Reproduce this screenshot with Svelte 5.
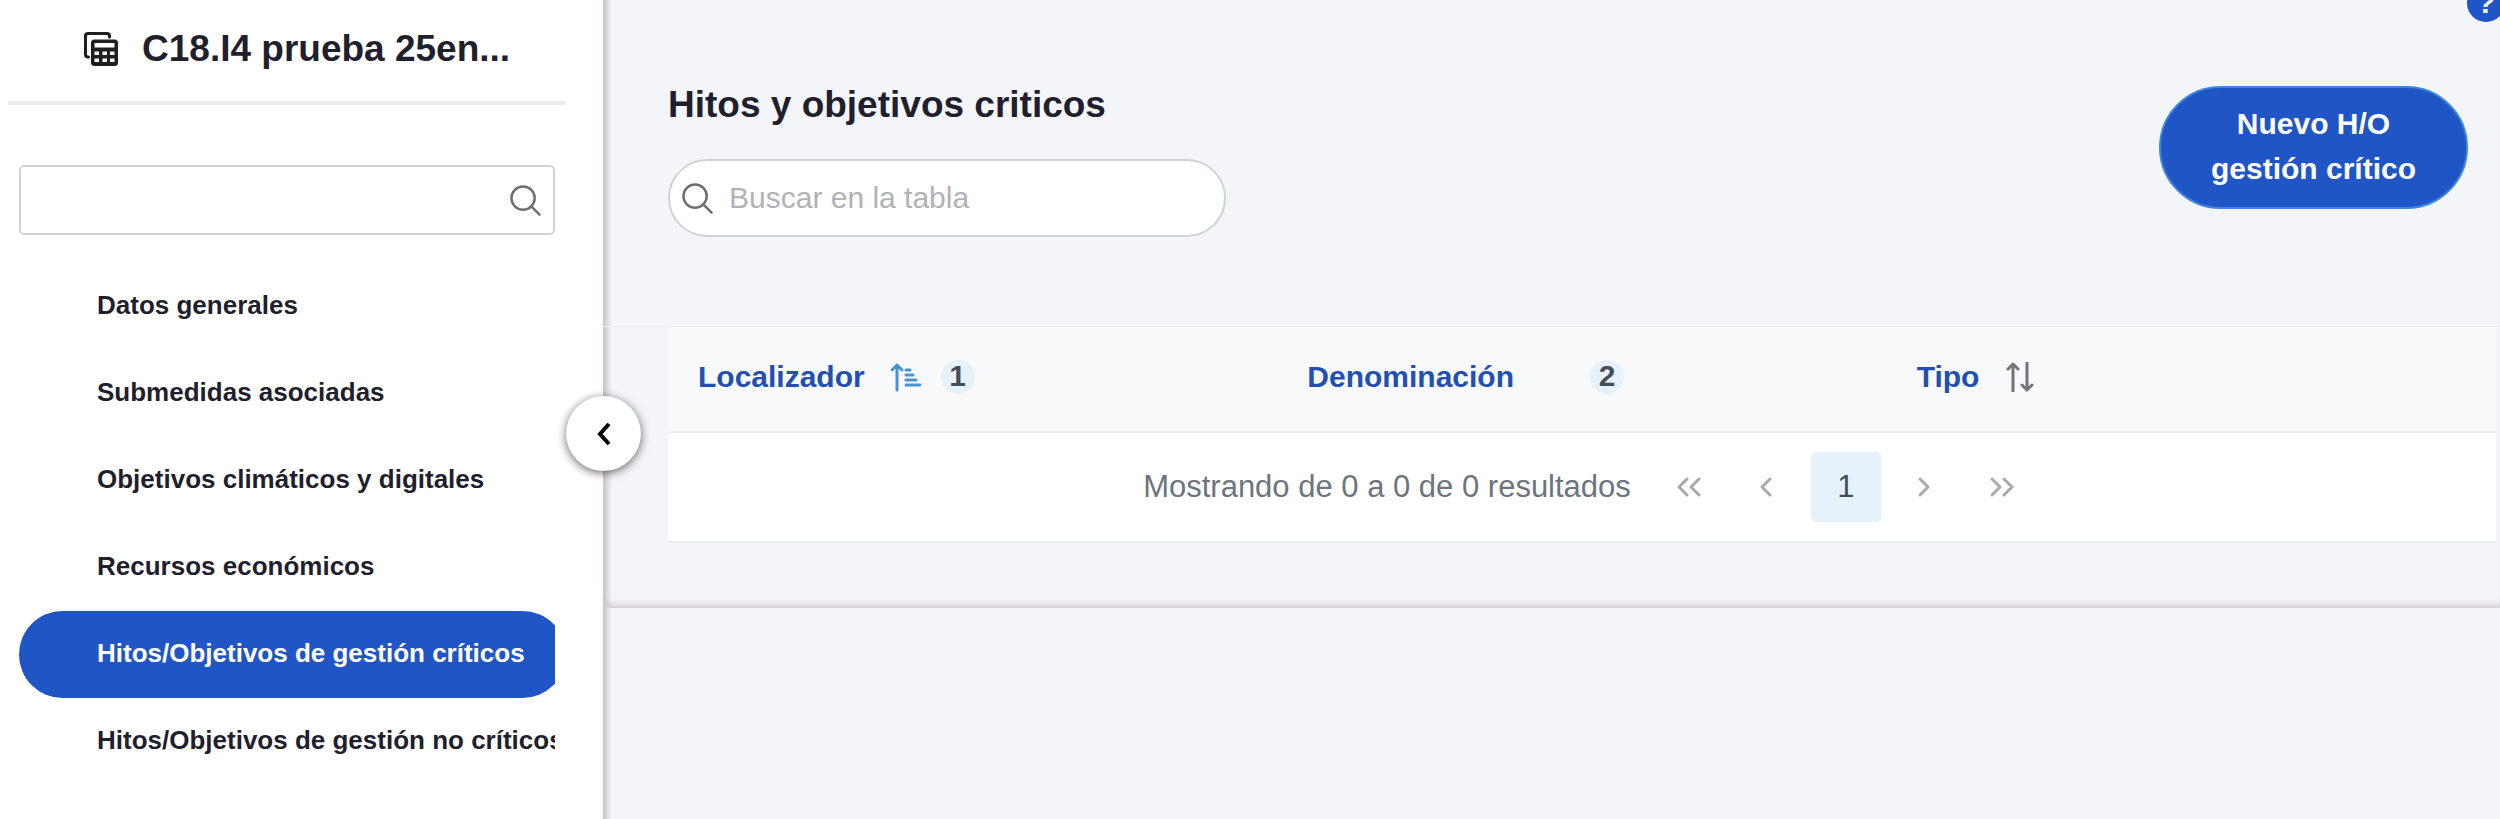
<script lang="ts">
	type Column = { label: string; sort: 'asc' | 'none' | 'both'; order?: number }

	const items = [
		'Datos generales',
		'Submedidas asociadas',
		'Objetivos climáticos y digitales',
		'Recursos económicos',
		'Hitos/Objetivos de gestión críticos',
		'Hitos/Objetivos de gestión no críticos'
	]

	const columns: Column[] = [
		{ label: 'Localizador', sort: 'asc', order: 1 },
		{ label: 'Denominación', sort: 'none', order: 2 },
		{ label: 'Tipo', sort: 'both' }
	]

	let active = $state(4)
	let filter = $state('')
	let search = $state('')
</script>

{#snippet searchIcon()}
	<svg class="search-icon" viewBox="0 0 32 32" aria-hidden="true">
		<circle cx="13.5" cy="13.5" r="12" />
		<path d="M22 22l8.500 8.500" />
	</svg>
{/snippet}

<div class="page">
	<aside>
		<header>
			<svg class="title-icon" viewBox="0 0 34 34" aria-hidden="true">
				<path d="M4.500 25H4c-1.500 0-2.500-1-2.500-2.500V4c0-1.500 1-2.500 2.500-2.500h19c1.500 0 2.500 1 2.500 2.500v1" />
				<rect class="solid" x="7" y="7.500" width="27" height="26.500" rx="3.500" />
				<path
					class="hole"
					d="M10.500 11h20v4.500h-20zM10.500 19.500h4.500v3.500h-4.500zM18.500 19.500h4.500v3.500h-4.500zM26 19.500h4.500v3.500H26zM10.500 26.500h4.500v3.500h-4.500zM18.500 26.500h4.500v3.500h-4.500zM26 26.500h4.500v3.500H26z"
				/>
			</svg>
			<h1>C18.I4 prueba 25en...</h1>
		</header>

		<div class="filter">
			<input type="text" aria-label="Filtrar menú" bind:value={filter} />
			{@render searchIcon()}
		</div>

		<nav>
			{#each items as item, i}
				<a href="#seccion-{i}" class:active={i === active} onclick={() => (active = i)}>{item}</a>
			{/each}
		</nav>

		<button class="collapse" aria-label="Contraer menú">
			<svg viewBox="0 0 14 22" aria-hidden="true"><path d="M12 1L3 11l9 10" /></svg>
		</button>
	</aside>

	<main>
		<button class="help" aria-label="Ayuda">?</button>

		<div class="panel">
			<div class="toolbar">
				<div>
					<h2>Hitos y objetivos criticos</h2>
					<div class="search">
						{@render searchIcon()}
						<input
							type="text"
							placeholder="Buscar en la tabla"
							aria-label="Buscar en la tabla"
							bind:value={search}
						/>
					</div>
				</div>
				<button class="new">Nuevo H/O<br />gestión crítico</button>
			</div>

			<div class="content">
				<table>
					<thead>
						<tr>
							{#each columns as column}
								<th scope="col">
									<div class="head">
										<span>{column.label}</span>
										{#if column.sort === 'asc'}
											<svg class="sort asc" viewBox="0 0 30 30" aria-hidden="true">
												<path d="M6 28V3M1 8l5-5 5 5M15 8h4M15 13h7M15 18h10M15 23h14" />
											</svg>
										{:else if column.sort === 'both'}
											<svg class="sort" viewBox="0 0 30 30" aria-hidden="true">
												<path d="M8 29V2M3 7l5-5 5 5M22 1v27M17 23l5 5 5-5" />
											</svg>
										{:else}
											<span class="sort"></span>
										{/if}
										{#if column.order}
											<span class="badge">{column.order}</span>
										{/if}
									</div>
								</th>
							{/each}
						</tr>
					</thead>
				</table>

				<div class="paginator">
					<span>Mostrando de 0 a 0 de 0 resultados</span>
					<button aria-label="Primera página" disabled>
						<svg viewBox="0 0 26 20" aria-hidden="true"><path d="M10 2l-8 8 8 8M22 2l-8 8 8 8" /></svg>
					</button>
					<button aria-label="Página anterior" disabled>
						<svg viewBox="0 0 26 20" aria-hidden="true"><path d="M15 2l-8 8 8 8" /></svg>
					</button>
					<button class="current" aria-current="page">1</button>
					<button aria-label="Página siguiente" disabled>
						<svg viewBox="0 0 26 20" aria-hidden="true"><path d="M9 2l8 8-8 8" /></svg>
					</button>
					<button aria-label="Última página" disabled>
						<svg viewBox="0 0 26 20" aria-hidden="true"><path d="M3 2l8 8-8 8M15 2l8 8-8 8" /></svg>
					</button>
				</div>
			</div>
		</div>
	</main>
</div>

<style>
	:global(body) {
		background: #f3f5f9;
	}

	.page {
		--blue: #1f55c4;
		--ink: #1f1f2e;
		--line: #e9ebed;

		display: grid;
		grid-template-columns: 603px 1fr;

		min-height: 100vh;

		font-family: 'Liberation Sans', Arial, sans-serif;
		font-size: 30px;
		color: var(--ink);
	}

	.page * {
		box-sizing: border-box;
	}

	button,
	input {
		font: inherit;
	}

	button {
		padding: 0;
		border: none;
		cursor: pointer;
	}

	svg {
		fill: none;
		stroke: currentColor;
		stroke-linecap: round;
		stroke-linejoin: round;
	}

	h1,
	h2 {
		margin: 0;

		font-size: 37px;
		line-height: 48px;
	}

	aside {
		position: relative;

		background: #fff;
	}

	header {
		display: flex;
		align-items: center;
		gap: 24px;

		margin: 0 37px 60px 8px;
		padding: 25px 0 28px 76px;
		border-bottom: 4px solid #ececec;
	}

	.title-icon {
		width: 34px;
		height: 34px;

		color: #1f1f20;
		stroke-width: 3;
	}

	.title-icon .solid {
		fill: currentColor;
		stroke: none;
	}

	.title-icon .hole {
		fill: #fff;
		stroke: none;
	}

	.search-icon {
		flex: none;

		width: 31px;
		height: 31px;

		color: #6c6e72;
		stroke-width: 2.5;
	}

	.filter {
		display: flex;
		align-items: center;

		height: 70px;
		margin: 0 48px 28px 19px;
		padding: 0 12px;
		border: 2px solid #d0d4d6;
		border-radius: 5px;
	}

	.filter input,
	.search input {
		flex: 1;

		min-width: 0;
		padding: 0;
		border: none;
		outline: none;
		background: none;
	}

	nav {
		display: grid;
		grid-template-columns: 547px;

		margin: 0 48px 0 19px;
		overflow: hidden;
	}

	nav a {
		padding: 26px 0 29px 78px;
		border-radius: 44px;

		font-size: 26px;
		font-weight: bold;
		line-height: 32px;
		white-space: nowrap;
		color: inherit;
		text-decoration: none;
	}

	nav a.active {
		background: var(--blue);
		color: #fff;
	}

	.collapse {
		display: grid;
		place-content: center;

		position: absolute;
		z-index: 1;
		top: 396px;
		right: -38px;

		width: 75px;
		height: 75px;
		border-radius: 50%;

		background: #fff;
		color: #000;
		box-shadow: 0 2px 10px rgb(0 0 0 / 60%);
	}

	.collapse svg {
		width: 14px;
		height: 22px;

		stroke-width: 4;
		stroke-linecap: butt;
		stroke-linejoin: miter;
	}

	main {
		position: relative;

		min-width: 0;
		overflow: hidden;

		background: linear-gradient(to right, #cbc2c6, #f3f5f9 9px);
	}

	.help {
		position: absolute;
		top: -16px;
		right: -5px;

		width: 38px;
		height: 38px;
		border-radius: 50%;

		background: var(--blue);
		color: #fff;
		font-weight: bold;
	}

	.panel {
		padding-bottom: 65px;
		border-bottom-left-radius: 8px;

		box-shadow: inset 0 -8px 8px -6px #cbc2c6;
	}

	.toolbar {
		display: flex;
		justify-content: space-between;
		align-items: flex-start;

		padding: 81px 32px 89px 65px;
	}

	.search {
		display: flex;
		align-items: center;
		gap: 16px;

		width: 558px;
		height: 78px;
		margin-top: 30px;
		padding: 0 24px 0 12px;
		border: 2px solid #d0d3d6;
		border-radius: 39px;

		background: #fff;
	}

	.search input::placeholder {
		color: #b0b2b5;
		opacity: 1;
	}

	.new {
		width: 309px;
		margin-top: 5px;
		padding: 13px 0 16px;
		border: 2px solid #3f86dc;
		border-radius: 62px;

		background: var(--blue);
		color: #fff;
		font-weight: bold;
		line-height: 45px;
	}

	.content {
		padding: 0 4px 0 65px;
		border-top: 1px solid #efeff3;
	}

	table {
		width: 100%;
		table-layout: fixed;
		border-collapse: collapse;
	}

	th {
		height: 105px;
		padding: 0 30px 4px;
		border-bottom: 2px solid var(--line);

		background: #f8f9fb;
		color: #2350b0;
		text-align: left;
	}

	.head {
		display: flex;
		align-items: center;
	}

	.sort {
		width: 30px;
		height: 30px;
		margin: 0 20px 0 26px;

		color: #717478;
		stroke-width: 3;
	}

	.sort.asc {
		color: #4b93cf;
	}

	.badge {
		width: 34px;
		height: 34px;
		border-radius: 50%;

		background: #e5f2fc;
		color: #454d57;
		line-height: 32px;
		text-align: center;
	}

	.paginator {
		display: flex;
		justify-content: center;
		align-items: center;
		gap: 8px;

		padding: 19px 0;
		border-bottom: 2px solid var(--line);

		background: #fff;
		color: #6c757d;
		font-size: 31px;
	}

	.paginator span {
		padding: 0 16px;
	}

	.paginator button {
		display: grid;
		place-content: center;

		width: 70px;
		height: 70px;
		border-radius: 5px;

		background: none;
		color: #a6aaae;
	}

	.paginator svg {
		width: 26px;
		height: 20px;

		stroke-width: 3;
	}

	.paginator .current {
		background: #e5f2fc;
		color: #454d57;
	}
</style>
